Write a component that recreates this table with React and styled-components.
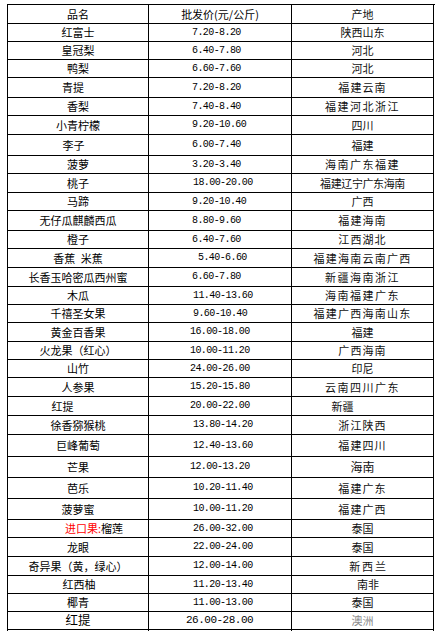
import styled, { createGlobalStyle } from "styled-components";

const GlobalStyle = createGlobalStyle`
  html, body {
    margin: 0;
    padding: 0;
    background: #fff;
    overflow: hidden;
  }
  body {
    font-family: "Noto Sans CJK SC", "Noto Sans", sans-serif;
    color: #000;
  }
`;

const Page = styled.main`
  padding: 4px 0 0 7px;
`;

const Table = styled.div`
  display: flex;
  flex-direction: column;
  width: 427px;
  border-top: 1px solid #000;
  border-left: 1px solid #000;
`;

const Row = styled.div`
  display: grid;
  grid-template-columns: 141px 143px 142px;
  height: ${(p) => p.$h}px;
`;

const Cell = styled.div`
  box-sizing: border-box;
  display: flex;
  align-items: center;
  justify-content: ${(p) => (p.$left ? "flex-start" : "center")};
  border-right: 1px solid #000;
  border-bottom: 1px solid #000;
  white-space: pre;
  line-height: 1;
  padding-left: ${(p) => (p.$shift > 0 ? p.$shift * 2 : 0)}px;
  padding-right: ${(p) => (p.$shift < 0 ? -p.$shift * 2 : 0)}px;
`;

const NameCell = styled(Cell)`
  font-size: ${(p) => (p.$big ? 12.5 : 11)}px;
`;

const PriceCell = styled(Cell)`
  font-family: ${(p) =>
    p.$head ? `"Noto Sans CJK SC", sans-serif` : `"Liberation Mono", monospace`};
  font-size: ${(p) => (p.$head ? 11 : p.$big ? 11 : 10)}px;
  letter-spacing: ${(p) => (p.$head ? 0 : p.$big ? -0.5 : -0.58)}px;
  padding-left: ${(p) => p.$pad || 0}px;
`;

const PlaceCell = styled(Cell)`
  font-size: ${(p) => (p.$big ? 12 : 11)}px;
  color: ${(p) => (p.$muted ? "#8a8a8a" : "#111")};
  letter-spacing: ${(p) => p.$sp || 0}px;
`;

const Import = styled.span`
  color: #f00;
`;

const rows = [
  { h: 18, name: "红富士", price: "7.20-8.20", pad: 43, place: "陕西山东" },
  { h: 18, name: "皇冠梨", price: "6.40-7.80", pad: 43, place: "河北" },
  { h: 18, name: "鸭梨", price: "6.60-7.60", pad: 43, place: "河北" },
  { h: 20, name: "青提", shift: -5, price: "7.20-8.20", pad: 43, place: "福建云南", sp: 1.1 },
  { h: 18, name: "香梨", price: "7.40-8.40", pad: 43, place: "福建河北浙江", sp: 1.5 },
  { h: 19, name: "小青柠檬", price: "9.20-10.60", pad: 43, place: "四川" },
  { h: 21, name: "李子", shift: -4.5, price: "6.00-7.40", pad: 43, place: "福建" },
  { h: 18, name: "菠萝", price: "3.20-3.40", pad: 43, place: "海南广东福建", sp: 1.5 },
  { h: 19, name: "桃子", price: "18.00-20.00", pad: 44, place: "福建辽宁广东海南", sp: -0.4 },
  { h: 18, name: "马蹄", price: "9.20-10.40", pad: 43, place: "广西" },
  { h: 20, name: "无仔瓜麒麟西瓜", price: "8.80-9.60", pad: 43, place: "福建海南", sp: 1.1 },
  { h: 18, name: "橙子", price: "6.40-7.60", pad: 43, place: "江西湖北", sp: 1.1 },
  { h: 19, name: "香蕉\u2002米蕉", price: "5.40-6.60", pad: 49, place: "福建海南云南广西", sp: 1.25 },
  { h: 19, name: "长香玉哈密瓜西州蜜", price: "6.60-7.80", pad: 43, place: "新疆海南浙江", sp: 1.5 },
  { h: 18, name: "木瓜", price: "11.40-13.60", pad: 44, place: "海南福建广东", sp: 1.5 },
  { h: 18, name: "千禧圣女果", price: "9.60-10.40", pad: 44, place: "福建广西海南山东", sp: 1.25 },
  { h: 19, name: "黄金百香果", price: "16.00-18.00", pad: 41, place: "福建" },
  { h: 18, name: "火龙果（红心）", price: "10.00-11.20", pad: 41, place: "广西海南", sp: 1.1 },
  { h: 18, name: "山竹", price: "24.00-26.00", pad: 41, place: "印尼" },
  { h: 19, name: "人参果", price: "15.20-15.80", pad: 41, place: "云南四川广东", sp: 1.5 },
  { h: 19, name: "红提", shift: -15.5, price: "20.00-22.00", pad: 41, place: "新疆", placeShift: -20 },
  { h: 19, name: "徐香猕猴桃", price: "13.80-14.20", pad: 44, place: "浙江陕西", sp: 1.1 },
  { h: 22, name: "巨峰葡萄", price: "12.40-13.60", pad: 44, place: "福建四川", sp: 1.1 },
  { h: 21, name: "芒果", price: "12.00-13.20", pad: 41, place: "海南", placeBig: true },
  { h: 21, name: "芭乐", price: "10.20-11.40", pad: 44, place: "福建广东", sp: 1.1 },
  { h: 21, name: "菠萝蜜", price: "10.00-11.20", pad: 44, place: "福建广西", sp: 1.1 },
  { h: 18, name: "榴莲", imported: true, shift: 16, price: "26.00-32.00", pad: 44, place: "泰国" },
  { h: 19, name: "龙眼", price: "22.00-24.00", pad: 44, place: "泰国" },
  { h: 19, name: "奇异果（黄，绿心）", price: "12.00-14.00", pad: 44, place: "新西兰", sp: 1.8, placeShift: 6 },
  { h: 18, name: "红西柚", shift: 1, price: "11.20-13.40", pad: 44, place: "南非", placeShift: 5.5 },
  { h: 18, name: "椰青", price: "11.00-13.00", pad: 44, place: "泰国" },
  { h: 18, name: "红提", big: true, price: "26.00-28.00", pad: 37, priceBig: true, place: "澳洲", muted: true },
];

export default function App() {
  return (
    <Page>
      <GlobalStyle />
      <Table>
        <Row $h={19}>
          <NameCell>品名</NameCell>
          <PriceCell $head>批发价(元/公斤)</PriceCell>
          <PlaceCell>产地</PlaceCell>
        </Row>
        {rows.map((r, i) => (
          <Row key={i} $h={r.h}>
            <NameCell $shift={r.shift || 0} $big={r.big}>
              {r.imported ? (
                <>
                  <Import>进口果:</Import>
                  {r.name}
                </>
              ) : (
                r.name
              )}
            </NameCell>
            <PriceCell $left $pad={r.pad} $big={r.priceBig}>
              {r.price}
            </PriceCell>
            <PlaceCell
              $sp={r.sp}
              $shift={r.placeShift || 0}
              $big={r.placeBig}
              $muted={r.muted}
            >
              {r.place}
            </PlaceCell>
          </Row>
        ))}
        <Row $h={20}>
          <NameCell />
          <PriceCell $left />
          <PlaceCell />
        </Row>
      </Table>
    </Page>
  );
}
